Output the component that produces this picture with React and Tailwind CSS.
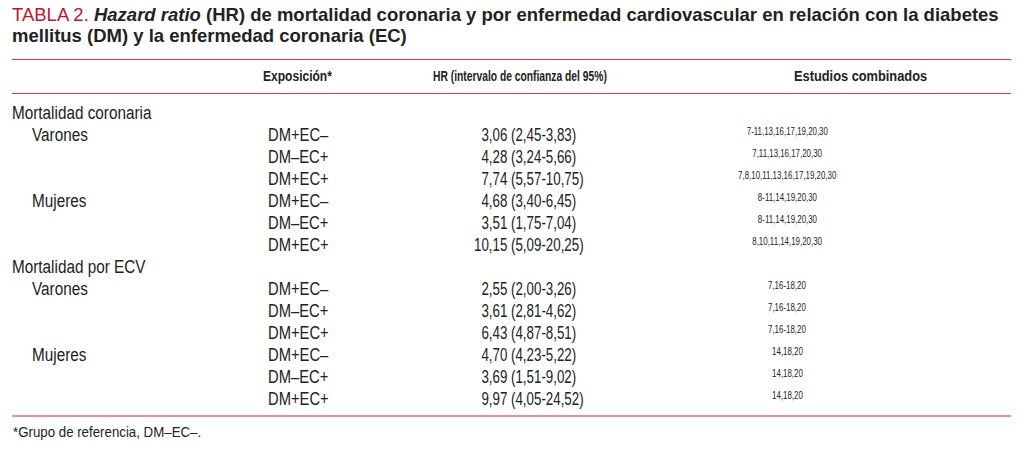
import React from "react";

const groups = [
  {
    title: "Mortalidad coronaria",
    subs: [
      {
        name: "Varones",
        rows: [
          ["DM+EC–", "3", ",06 (2,45-3,83)", "7-11,13,16,17,19,20,30"],
          ["DM–EC+", "4", ",28 (3,24-5,66)", "7,11,13,16,17,20,30"],
          ["DM+EC+", "7", ",74 (5,57-10,75)", "7,8,10,11,13,16,17,19,20,30"],
        ],
      },
      {
        name: "Mujeres",
        rows: [
          ["DM+EC–", "4", ",68 (3,40-6,45)", "8-11,14,19,20,30"],
          ["DM–EC+", "3", ",51 (1,75-7,04)", "8-11,14,19,20,30"],
          ["DM+EC+", "10", ",15 (5,09-20,25)", "8,10,11,14,19,20,30"],
        ],
      },
    ],
  },
  {
    title: "Mortalidad por ECV",
    subs: [
      {
        name: "Varones",
        rows: [
          ["DM+EC–", "2", ",55 (2,00-3,26)", "7,16-18,20"],
          ["DM–EC+", "3", ",61 (2,81-4,62)", "7,16-18,20"],
          ["DM+EC+", "6", ",43 (4,87-8,51)", "7,16-18,20"],
        ],
      },
      {
        name: "Mujeres",
        rows: [
          ["DM+EC–", "4", ",70 (4,23-5,22)", "14,18,20"],
          ["DM–EC+", "3", ",69 (1,51-9,02)", "14,18,20"],
          ["DM+EC+", "9", ",97 (4,05-24,52)", "14,18,20"],
        ],
      },
    ],
  },
];

const font = { fontFamily: '"Liberation Sans", Arial, sans-serif' };

function Row({ label, indent, exp, hrInt, hrRest, studies }) {
  return (
    <div className="flex h-[22px] leading-[22px] text-[18px] text-[#222]">
      <div className={`w-[256px] shrink-0 ${indent ? "pl-[20px]" : ""} whitespace-nowrap`}>
        {label && <span className="inline-block scale-x-[0.85] origin-left">{label}</span>}
      </div>
      <div className="w-[205.5px] shrink-0 whitespace-nowrap">
        {exp && <span className="inline-block scale-x-[0.82] origin-left">{exp}</span>}
      </div>
      <div className="w-[200px] shrink-0 whitespace-nowrap">
        {hrRest && (
          <span className="inline-block scale-x-[0.74] origin-left">
            <span className="inline-block w-[20px] text-right">{hrInt}</span>
            {hrRest}
          </span>
        )}
      </div>
      <div className="w-[227px] shrink-0 flex justify-center">
        {studies && (
          <span className="inline-block text-[10px] leading-[12px] mt-[2px] whitespace-nowrap scale-x-[0.79] origin-center">
            {studies}
          </span>
        )}
      </div>
    </div>
  );
}

export default function App() {
  return (
    <div className="w-[1024px] h-[450px] bg-white overflow-hidden" style={font}>
      <div className="pl-[12px] pr-[13px]">
        <div className="pt-[4px] text-[18.5px] leading-[21px] font-bold text-[#222] whitespace-nowrap">
          <span className="font-normal text-[#c8102e]">TABLA 2. </span>
          <span className="italic">Hazard ratio</span> (HR) de mortalidad coronaria y por enfermedad cardiovascular en relación con la diabetes
          <br />
          mellitus (DM) y la enfermedad coronaria (EC)
        </div>
        <div className="mt-[13px]">
          <div className="border-t border-b border-[#d8394a] h-[35px] flex items-center text-[14px] font-bold text-[#222] whitespace-nowrap">
            <div className="w-[251px] shrink-0" />
            <div className="w-[170px] shrink-0">
              <span className="inline-block scale-x-[0.86] origin-left">Exposición*</span>
            </div>
            <div className="w-[361px] shrink-0">
              <span className="inline-block scale-x-[0.735] origin-left">HR (intervalo de confianza del 95%)</span>
            </div>
            <div className="shrink-0">
              <span className="inline-block scale-x-[0.915] origin-left">Estudios combinados</span>
            </div>
          </div>
          <div className="pt-[8px] pb-[5px] border-b-2 border-[#e2939b]">
            {groups.map((g) => (
              <div key={g.title}>
                <Row label={g.title} />
                {g.subs.map((s) =>
                  s.rows.map((r, i) => (
                    <Row
                      key={s.name + i}
                      label={i === 0 ? s.name : ""}
                      indent
                      exp={r[0]}
                      hrInt={r[1]}
                      hrRest={r[2]}
                      studies={r[3]}
                    />
                  ))
                )}
              </div>
            ))}
          </div>
          <div className="pt-[5px] text-[15px] leading-[20px] text-[#222] pl-[1px] whitespace-nowrap">
            <span className="inline-block scale-x-[0.885] origin-left">*Grupo de referencia, DM–EC–.</span>
          </div>
        </div>
      </div>
    </div>
  );
}
